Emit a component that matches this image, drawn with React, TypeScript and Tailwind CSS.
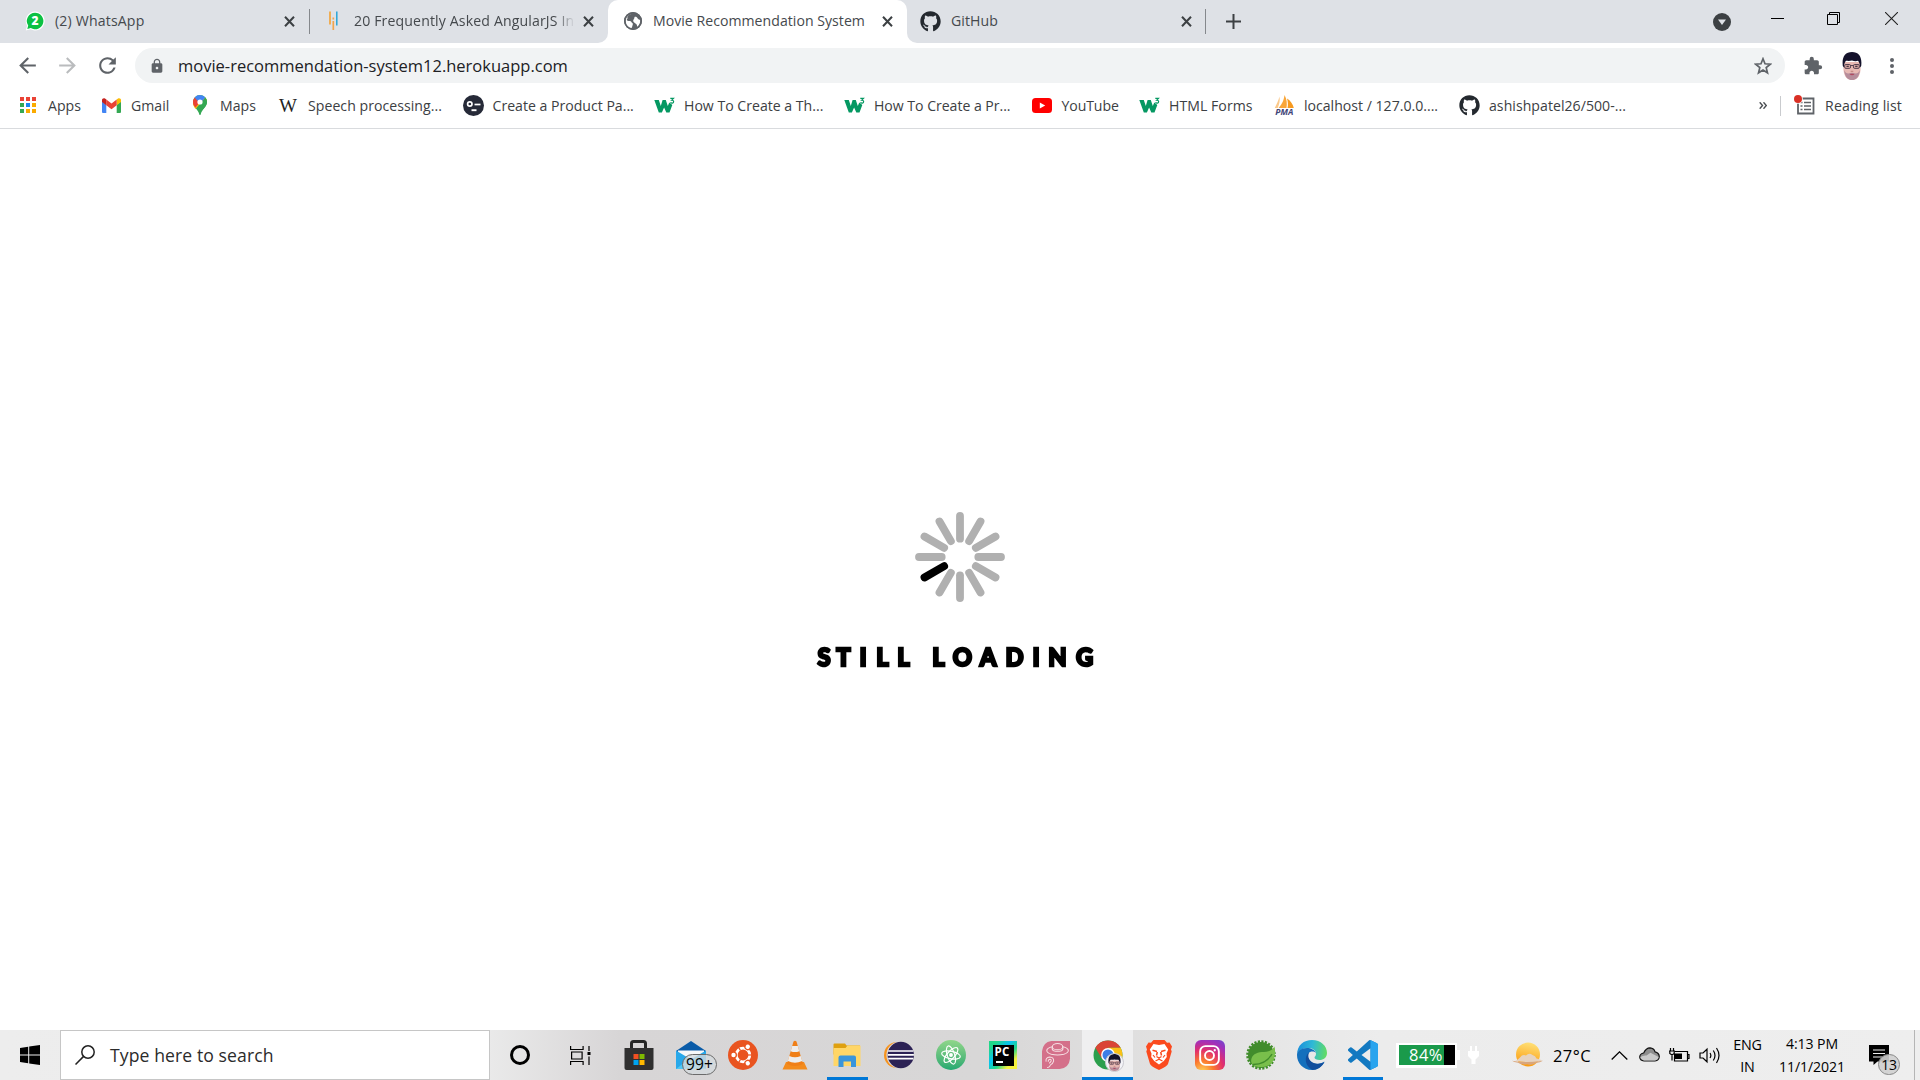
import React from "react";
import { FaGithub } from "react-icons/fa";
import { MdExtension, MdLock, MdRefresh, MdArrowBack, MdArrowForward } from "react-icons/md";

/* ---------- small shared drawings ---------- */

function Portrait({ className }: { className: string }) {
  return (
    <svg className={className} viewBox="0 0 20 28" preserveAspectRatio="none">
      <path d="M2 10h16l.6 6c0 3-.6 6-2 8.500-1.500 2.300-3.500 3.500-6.600 3.500s-5.100-1.200-6.600-3.500C2 22 1.400 19 1.400 16z" fill="#e8b9b3" />
      <path d="M.8 14C-.3 5 3 0 10 0s10.300 5 9.200 14l-1.200 1.500c0-3-.6-5-2-6.700-2 .6-4 .3-6-.3-2 .600-4 .5-6 .3-1.400 1.700-2 3.700-2 6.700z" fill="#14122b" />
      <path d="M2 18c.6 4 1.700 6.500 3 8 1.500 1.500 3 2 5 2s3.500-.5 5-2c1.300-1.500 2.400-4 3-8-1.300 2.500-2.300 3.500-4.500 3.500-2.300-1-4.700-1-7 0C4.300 21.500 3.300 20.500 2 18z" fill="#b68d9b" />
      <rect x="2.600" y="12.500" width="6" height="3.900" rx="1.300" fill="#d2a3a0" stroke="#4a3848" strokeWidth=".9" />
      <rect x="11.400" y="12.500" width="6" height="3.900" rx="1.300" fill="#d2a3a0" stroke="#4a3848" strokeWidth=".9" />
      <path d="M8.600 13.500h2.800" stroke="#4a3848" strokeWidth=".9" />
      <path d="M4.500 14.300h2.300M13.200 14.300h2.300" stroke="#2a1d2c" strokeWidth="1" />
      <path d="M8.700 19.300h2.600" stroke="#b87a74" strokeWidth=".9" />
      <path d="M7.500 22.300c1.700-.6 3.300-.6 5 0-1.500 1.300-3.500 1.300-5 0z" fill="#b04a5e" />
    </svg>
  );
}

function TabClose() {
  return (
    <svg className="h-[11px] w-[11px] shrink-0" viewBox="0 0 11 11">
      <path d="M1 .8l9 9.400M10 .8l-9 9.400" stroke="#3c4043" strokeWidth="2" />
    </svg>
  );
}

function GlobeIcon() {
  return (
    <svg className="h-[18px] w-[18px] shrink-0" viewBox="0 0 18 18">
      <circle cx="9" cy="9" r="9" fill="#5f6368" />
      <path d="M9.500 1.800c-2 .8-1.500 2-3 3-1.700.8-3.200 1.200-3.700 2.700-.3 1.500 1.500 1.300 3 1.500 1.600.2 1.500 1.300 2.500 2 1 .5.500 1.700.200 2.500-.3 1-.5 2-1.200 3.200-3.200-.6-5.800-3.500-5.800-7.700 0-4 3.500-7.400 8-7.200z" fill="#fff" />
      <path d="M10.500 5c1.500-.5 2.500.3 3.200 1.500.5 1 1.700 1 2.700 1.500.2 3-1.200 5.500-3.400 7 .3-1.700-.2-2.700-1.200-3.300C10.500 10.700 9 10 9.200 8.500c.2-1.200 1.300-1.300 1.300-3.500z" fill="#fff" />
      <path d="M9 0a9 9 0 1 1 0 18A9 9 0 0 1 9 0zm0 1.700a7.300 7.300 0 1 0 0 14.600A7.300 7.300 0 0 0 9 1.700z" fill="#5f6368" />
      <path d="M3 5.500c2 1.300 4.500 1 6-.5 1.200-1.200 2-1.500 3-1.700L10 1.500 5 2.500z" fill="#5f6368" />
    </svg>
  );
}

/* ---------- tab strip ---------- */

function TabStrip() {
  return (
    <div className="flex h-[43px] bg-[#dee1e6] text-[14.1px] text-[#45494d]">
      <div className="flex h-[42px] w-[311px] items-center pl-[25px]">
        <svg className="h-5 w-5 shrink-0" viewBox="0 0 20 20">
          <path d="M10 .5a9.500 9.500 0 1 1-4.500 17.800L.8 19.500l1.200-4.700A9.500 9.500 0 0 1 10 .5z" fill="#fff" />
          <path d="M10 1.700a8.300 8.300 0 1 1-4.200 15.400L2.300 18l.9-3.400A8.300 8.300 0 0 1 10 1.700z" fill="#0cc143" />
          <text x="10" y="14.400" textAnchor="middle" fontFamily="Open Sans" fontSize="12" fontWeight="800" fill="#fff">2</text>
        </svg>
        <span className="ml-[10px] w-[229px] tracking-[0.17px] whitespace-nowrap">(2) WhatsApp</span>
        <TabClose />
        <span className="ml-[14px] h-[25px] w-px shrink-0 bg-[#85888c]" />
      </div>
      <div className="flex h-[42px] w-[287px] items-center pl-[17px]">
        <svg className="h-5 w-[10px] shrink-0" viewBox="0 0 10 20">
          <path d="M2 .5v13" stroke="#f3a43b" strokeWidth="1.700" />
          <path d="M5.300 6.500v2M5.300 10v9" stroke="#f0a54e" strokeWidth="1.700" />
          <path d="M8.800 .5v14" stroke="#28a5d8" strokeWidth="1.500" />
        </svg>
        <span className="ml-4 w-[221px] shrink-0 overflow-hidden [mask-image:linear-gradient(to_right,black_91%,transparent)] tracking-[0.14px] whitespace-nowrap">
          20 Frequently Asked AngularJS In
        </span>
        <span className="ml-[8px] flex">
          <TabClose />
        </span>
      </div>
      <div className="flex">
        <div className="w-[10px] bg-white">
          <div className="h-full rounded-br-[10px] bg-[#dee1e6]" />
        </div>
        <div className="flex w-[299px] items-center rounded-t-[10px] bg-white pb-px pl-[16px]">
          <GlobeIcon />
          <span className="ml-[11px] w-[229px] tracking-[0.03px] whitespace-nowrap">Movie Recommendation System</span>
          <TabClose />
        </div>
        <div className="w-[10px] bg-white">
          <div className="h-full rounded-bl-[10px] bg-[#dee1e6]" />
        </div>
      </div>
      <div className="flex h-[42px] items-center pl-[3px]">
        <FaGithub className="h-[21px] w-[21px] text-[#24292f]" />
        <span className="ml-[10px] w-[230px] tracking-[0.08px]">GitHub</span>
        <TabClose />
        <span className="ml-[13px] h-[25px] w-px bg-[#85888c]" />
        <svg className="ml-5 h-[15px] w-[15px]" viewBox="0 0 15 15">
          <path d="M7.500 0v15M0 7.500h15" stroke="#3c4043" strokeWidth="2" />
        </svg>
      </div>
      <div className="ml-auto flex pr-[22px]">
        <svg className="mt-[13px] mr-[40px] h-[18px] w-[18px]" viewBox="0 0 18 18">
          <circle cx="9" cy="9" r="9" fill="#3c4043" />
          <path d="M5 6.500h8l-4 5.500z" fill="#dee1e6" />
        </svg>
        <svg className="mt-3 mr-[43px] h-[13px] w-[13px]" viewBox="0 0 13 13">
          <path d="M0 6.500h13" stroke="#000" />
        </svg>
        <svg className="mt-3 mr-[45px] h-[13px] w-[13px]" viewBox="0 0 13 13" fill="none" stroke="#000">
          <path d="M.5 2.500h10v10H.5zM2.500 2.500v-2h10v10h-2" />
        </svg>
        <svg className="mt-3 h-[13px] w-[13px]" viewBox="0 0 13 13">
          <path d="M0 0l13 13M13 0L0 13" stroke="#222" strokeWidth="1.100" />
        </svg>
      </div>
    </div>
  );
}

/* ---------- address bar ---------- */

function Toolbar() {
  return (
    <div className="flex h-[45px] items-center pl-[15px] text-[#5f6368]">
      <MdArrowBack className="h-[25px] w-[25px]" />
      <MdArrowForward className="ml-[15px] h-[25px] w-[25px] text-[#babcbe]" />
      <MdRefresh className="ml-[15px] h-[25px] w-[25px]" />
      <div className="ml-[15px] flex h-[35px] w-[1650px] items-center rounded-full bg-[#f1f3f4]">
        <MdLock className="ml-[14px] h-4 w-4" />
        <span className="ml-[13px] pt-[2px] text-[16.5px] text-[#202124]">movie-recommendation-system12.herokuapp.com</span>
        <svg className="mr-[13px] ml-auto h-[18px] w-[18px]" viewBox="0 0 18 18">
          <path d="M9 1.800l2 5 5.300.4-4.100 3.400 1.300 5.200L9 13l-4.500 2.800 1.300-5.200-4.100-3.400L7 6.800z" fill="none" stroke="#5f6368" strokeWidth="1.700" />
        </svg>
      </div>
      <MdExtension className="ml-[18px] h-[20px] w-[20px]" />
      <Portrait className="ml-[19px] h-[28px] w-5" />
      <div className="ml-[28px] flex flex-col gap-[2px]">
        <span className="h-1 w-1 rounded-full bg-[#5f6368]" />
        <span className="h-1 w-1 rounded-full bg-[#5f6368]" />
        <span className="h-1 w-1 rounded-full bg-[#5f6368]" />
      </div>
    </div>
  );
}

/* ---------- bookmarks ---------- */

function AppsIcon() {
  const dots = ["#ea4335", "#ea4335", "#ea4335", "#34a853", "#1a86f0", "#fbab00", "#34a853", "#fbab00", "#fbab00"];
  return (
    <span className="grid grid-cols-3 gap-[2px]">
      {dots.map((c, i) => (
        <span key={i} className="h-1 w-1" style={{ backgroundColor: c }} />
      ))}
    </span>
  );
}

function GmailIcon() {
  return (
    <svg className="h-[15px] w-[19px]" viewBox="0 0 19 15">
      <path d="M0 3.500l4.300 3.300V15H1.300C.5 15 0 14.500 0 13.700z" fill="#4285f4" />
      <path d="M19 3.500l-4.300 3.300V15h3c.8 0 1.300-.5 1.300-1.300z" fill="#34a853" />
      <path d="M14.700 1.500L16 .5c1.300-.9 3 0 3 1.500v2l-4.300 3.300z" fill="#fbbc04" />
      <path d="M4.300 1.600l5.200 4 5.200-4v5.700l-5.200 4-5.200-4z" fill="#ea4335" />
      <path d="M0 2C0 .5 1.700-.4 3 .5l1.300 1v5.800L0 4z" fill="#c5221f" />
    </svg>
  );
}

function MapsIcon() {
  return (
    <svg className="h-5 w-[14px]" viewBox="0 0 14 20">
      <path d="M7 0a7 7 0 0 1 7 7c0 5-5.500 7.500-6.300 12.500-.1.700-1.300.7-1.400 0C5.500 14.500 0 12 0 7a7 7 0 0 1 7-7z" fill="#34a853" />
      <path d="M14 7A7 7 0 0 0 12.400 2.600L2.500 14C1 12 0 10 0 7L7 0z" fill="#fbbc04" />
      <path d="M0 7a7 7 0 0 1 1.700-4.500L7 7l-4.500 5.500C1 11 0 9.500 0 7z" fill="#ea4335" />
      <path d="M1.700 2.500A7 7 0 0 1 12.400 2.600L7 8.500z" fill="#4285f4" />
      <path d="M12.400 2.600A7 7 0 0 1 14 7c0 3-2 5-3.700 7L7 10z" fill="#34a853" />
      <circle cx="7" cy="7" r="2.600" fill="#fff" />
    </svg>
  );
}

function WinkIcon() {
  return (
    <svg className="ml-px h-[21px] w-[21px] shrink-0" viewBox="0 0 21 21">
      <circle cx="10.500" cy="10.500" r="10.500" fill="#262a38" />
      <circle cx="6.800" cy="9" r="2.200" fill="none" stroke="#fff" strokeWidth="1.700" />
      <path d="M11.500 9.500h6" stroke="#fff" strokeWidth="1.700" />
      <path d="M8.500 15.200h5" stroke="#fff" strokeWidth="1.900" />
    </svg>
  );
}

function W3Icon() {
  return (
    <svg className="h-[16px] w-[21px] shrink-0" viewBox="0 0 21 16">
      <path d="M.3 3h4.500l2 6 1.800-6h3.200l2 6 1.500-3.500 3 2.500-2.800 7.500h-3.200l-2.200-5-2.200 5H4.800z" fill="#059862" />
      <path d="M16.300 1.300h3.200l-1.800 1.900c1.300-.1 2 .6 1.900 1.600 0 1.300-1.900 1.800-3.200.8" fill="none" stroke="#059862" strokeWidth="1.200" />
    </svg>
  );
}

function YouTubeIcon() {
  return (
    <svg className="h-[15px] w-[20px]" viewBox="0 0 20 15">
      <rect width="20" height="15" rx="3.500" fill="#f00" />
      <path d="M7.800 4.500v6l5.400-3z" fill="#fff" />
    </svg>
  );
}

function PmaIcon() {
  return (
    <svg className="h-5 w-[21px] shrink-0" viewBox="0 0 21 20">
      <path d="M.8 13C3 8.500 4.500 5 5.500 1.500c.7 4-.2 8-1.800 11.500z" fill="#fbc98a" />
      <path d="M4.500 13C9 8 10 4 10.500 0c2.500 4 2.700 9 2 13z" fill="#f9a63a" />
      <path d="M13.500 13c.8-3 .4-6.500-.5-9.500 3.500 2 6 6 6.800 9.500z" fill="#f79a20" />
      <text x="10.300" y="19.500" textAnchor="middle" fontFamily="Open Sans" fontSize="8.500" fontWeight="700" fontStyle="italic" fill="#3f4577">PMA</text>
    </svg>
  );
}

const W = () => <span className="font-['Liberation_Serif',serif] text-[19px] leading-none text-[#222]">W</span>;
const Git = () => <FaGithub className="h-[21px] w-[21px] shrink-0 text-[#24292f]" />;

const bookmarks = [
  { label: "Apps", Icon: AppsIcon, cls: "w-[83px]" },
  { label: "Gmail", Icon: GmailIcon, cls: "w-[89px]" },
  { label: "Maps", Icon: MapsIcon, cls: "w-[88px]" },
  { label: "Speech processing...", Icon: W, cls: "w-[184.500px] tracking-[0.04px]" },
  { label: "Create a Product Pa...", Icon: WinkIcon, cls: "w-[191.500px]" },
  { label: "How To Create a Th...", Icon: W3Icon, cls: "w-[190px]" },
  { label: "How To Create a Pr...", Icon: W3Icon, cls: "w-[187.500px] tracking-[-0.03px]" },
  { label: "YouTube", Icon: YouTubeIcon, cls: "w-[107.500px] tracking-[-0.1px]" },
  { label: "HTML Forms", Icon: W3Icon, cls: "w-[135px] tracking-[0.04px]" },
  { label: "localhost / 127.0.0....", Icon: PmaIcon, cls: "w-[185px]" },
  { label: "ashishpatel26/500-...", Icon: Git, cls: "w-[180px] tracking-[0.04px]" },
];

function BookmarksBar() {
  return (
    <div className="flex h-[41px] items-center border-b border-[#d9dbde] pb-[5px] pl-[18px] text-[14.1px] text-[#3c4043]">
      {bookmarks.map(({ label, Icon, cls }, i) => (
        <div key={i} className={"flex shrink-0 items-center gap-[10px] whitespace-nowrap " + cls}>
          <span className="flex w-5 shrink-0 justify-center">
            <Icon />
          </span>
          {label}
        </div>
      ))}
      <svg className="ml-auto h-[7px] w-[8px]" viewBox="0 0 8 7">
        <path d="M.7.300l2.800 3.200L.7 6.700M4.500.300l2.800 3.200-2.800 3.200" fill="none" stroke="#4a4e52" strokeWidth="1.400" />
      </svg>
      <span className="ml-[13px] h-5 w-px bg-[#c9cbce]" />
      <svg className="ml-[13px] h-[21px] w-[21px]" viewBox="0 0 21 21">
        <path d="M4 3.500h15.500V18.500H4z" fill="none" stroke="#5f6368" strokeWidth="1.800" />
        <path d="M6.500 7.500h2M6.500 11h2M6.500 14.500h2M10 7.500h7M10 11h7M10 14.500h7" stroke="#5f6368" strokeWidth="1.600" />
        <circle cx="4" cy="4" r="4.800" fill="#fff" />
        <circle cx="4" cy="4" r="4" fill="#d93025" />
      </svg>
      <span className="mr-[18px] ml-[10px] tracking-[0.12px]">Reading list</span>
    </div>
  );
}

/* ---------- page ---------- */

const spokes = [0, 30, 60, 90, 120, 150, 180, 210, 240, 270, 300, 330];
const still: [string, string][] = [["S", "w-5"], ["T", "w-[19px]"], ["I", "w-5"], ["L", "w-[19px]"], ["L", "w-[23px]"]];
const loading: [string, string][] = [
  ["L", "w-[23px]"], ["O", "w-[25px]"], ["A", "w-[26px]"], ["D", "w-[27px]"], ["I", "w-4"], ["N", "w-[27px]"], ["G", "w-[27px]"],
];

function Word({ letters }: { letters: [string, string][] }) {
  return (
    <span className="flex">
      {letters.map(([c, w], i) => (
        <span key={i} className={"flex scale-x-95 justify-center " + w}>{c}</span>
      ))}
    </span>
  );
}

function Page() {
  return (
    <main className="flex grow flex-col items-center bg-white pt-[381.500px]">
      <svg className="h-[92px] w-[92px]" viewBox="-46 -46 92 92">
        {spokes.map((a) => (
          <path key={a} d="M0-18.300V-41" transform={`rotate(${a})`} stroke={a === 240 ? "#000" : "#b0b0b0"} strokeWidth="7.800" strokeLinecap="round" />
        ))}
      </svg>
      <div className="mt-[36.500px] mr-[8px] flex gap-3 font-['Lato',sans-serif] text-[25px] leading-[34px] font-black text-black [-webkit-text-stroke:2.400px_black]">
        <Word letters={still} />
        <Word letters={loading} />
      </div>
    </main>
  );
}

/* ---------- taskbar icons ---------- */

function StoreIcon() {
  return (
    <svg className="h-[30px] w-[30px]" viewBox="0 0 30 30">
      <path d="M7.500 9V3.500Q7.500 1.500 9.500 1.500h10Q21.500 1.500 21.500 3.500V9" fill="none" stroke="#262626" strokeWidth="3" />
      <path d="M.5 8h29v20q0 2-2 2h-25q-2 0-2-2z" fill="#303030" />
      <path d="M9.500 14h5v5h-5z" fill="#f25022" />
      <path d="M15.500 14h5v5h-5z" fill="#7fba00" />
      <path d="M9.500 20h5v5h-5z" fill="#00a4ef" />
      <path d="M15.500 20h5v5h-5z" fill="#ffb900" />
    </svg>
  );
}

function MailIcon() {
  return (
    <div className="relative">
      <svg className="h-[30px] w-[30px]" viewBox="0 0 30 30">
        <path d="M0 11L15 1l15 10v5H0z" fill="#0a5ba8" />
        <path d="M2 10.500h26v8H2z" fill="#f6f8fa" />
        <path d="M0 10.500l15 9 15-9V29H0z" fill="#28a8ea" />
        <path d="M0 29l15-11.500L30 29z" fill="#50c8f4" />
      </svg>
      <span className="absolute top-[14px] left-[6px] flex h-[21px] w-[35px] items-center justify-center rounded-full border border-[#6b6b6b] bg-[#d4dadd]/80 text-[15.500px] font-medium tracking-[0.2px] text-black">
        99+
      </span>
    </div>
  );
}

function UbuntuIcon() {
  return (
    <svg className="h-[30px] w-[30px]" viewBox="-15 -15 30 30">
      <circle r="15" fill="#e95420" />
      <circle r="6.800" fill="none" stroke="#fff" strokeWidth="2.800" />
      {[0, 120, 240].map((a) => (
        <g key={a} transform={`rotate(${a})`}>
          <circle cx="-9.300" r="3.300" fill="#e95420" />
          <circle cx="-9.500" r="2.200" fill="#fff" />
          <path d="M5 0h5" stroke="#e95420" strokeWidth="1.200" />
        </g>
      ))}
    </svg>
  );
}

function VlcIcon() {
  return (
    <svg className="h-[30px] w-[26px]" viewBox="0 0 26 30">
      <path d="M4 22h18l3.500 7.500H.5z" fill="#f38b1c" />
      <path d="M11.500 1.500Q13 0 14.500 1.500L21 24Q13 28 5 24z" fill="#f07f17" />
      <path d="M10.200 6h5.600l1.500 5.200q-4.300 1.800-8.600 0z" fill="#ededed" />
      <path d="M7.300 16q5.700 2.400 11.400 0l1.500 5q-7.200 3.400-14.400 0z" fill="#ededed" />
    </svg>
  );
}

function ExplorerIcon() {
  return (
    <svg className="h-[26px] w-[28px]" viewBox="0 0 28 26">
      <path d="M.5 2.500q0-1 1-1h10.500l1.500 2H27v9H.5z" fill="#dfa00f" />
      <path d="M.5 6h12l2-2.500H27q.5 0 .5.500v20H.5z" fill="#ffd667" />
      <path d="M5.500 25V15.500q0-2 2-2h13.500q2 0 2 2V25h-5v-5.500h-7.500V25z" fill="#3a95db" />
    </svg>
  );
}

function EclipseIcon() {
  return (
    <svg className="h-[28px] w-[30px]" viewBox="0 0 30 28">
      <circle cx="13" cy="14" r="13" fill="#f7941e" />
      <circle cx="16" cy="14" r="13.600" fill="#dcd9dc" />
      <circle cx="16.800" cy="14" r="13.200" fill="#2c2255" />
      <path d="M4.200 10h25.200M3.700 13.800h26.200M4.200 17.600h25.200" stroke="#fff" strokeWidth="1.700" />
    </svg>
  );
}

function AtomIcon() {
  return (
    <span className="flex h-[30px] w-[30px] items-center justify-center rounded-full bg-gradient-to-b from-[#8fd68a] to-[#1fa971]">
      <svg className="h-[22px] w-[22px]" viewBox="-11 -11 22 22" fill="none" stroke="#fff" strokeWidth="1.200">
        <ellipse rx="9.500" ry="3.700" transform="rotate(12)" />
        <ellipse rx="9.500" ry="3.700" transform="rotate(72)" />
        <ellipse rx="9.500" ry="3.700" transform="rotate(132)" />
        <circle r="1.300" fill="#fff" />
      </svg>
    </span>
  );
}

function PyCharmIcon() {
  return (
    <span className="flex h-[28px] w-[28px] items-center justify-center bg-[linear-gradient(135deg,#21d789_15%,#07c3f2_40%,#21d789_60%,#f6f23f_80%)]">
      <span className="flex h-[21px] w-[21px] flex-col bg-black pl-[2px] text-white">
        <span className="text-[11.500px] leading-[14px] font-bold tracking-[0.2px]">PC</span>
        <span className="mt-[2px] ml-px h-[2px] w-[7px] bg-white" />
      </span>
    </span>
  );
}

function EarIcon() {
  return (
    <svg className="h-[28px] w-[28px]" viewBox="0 0 27 27">
      <path d="M9 0h18v17q-1 9-10 10H0V10Q1 1 9 0z" fill="#d4708a" />
      <g fill="none" stroke="#f6dfe3" strokeWidth="1">
        <path d="M10 5.500C3 7 3 11 9 12.800q6 1.500 12 0C27 11 27 7 20 5.500" />
        <ellipse cx="15" cy="5.500" rx="5" ry="3" />
        <path d="M10 5.500q-.8 3 1.200 3.800 3.800 1.300 7.600 0Q20.800 8.500 20 5.500" />
        <path d="M4 20q-1-4 3.500-4.500 4 .2 3.700 4-.7 2.500-3 3.500-1 3-3.200 2.500M6 20q0-2.500 2-2.300 1.500.5.500 2.300l-1.500 1.500" />
      </g>
    </svg>
  );
}

function ChromeIcon() {
  return (
    <div className="relative">
      <svg className="h-[30px] w-[30px]" viewBox="-15 -15 30 30">
        <circle r="14.500" fill="#2b9f4c" />
        <path d="M-12.600-7.200A14.500 14.500 0 0 1 12.600-7.200H0L-6.200 3.600z" fill="#da4535" />
        <path d="M12.600-7.200A14.500 14.500 0 0 1 0 14.500L6.300 3.600 0-7.200z" fill="#fbc116" />
        <circle r="6.900" fill="#fff" />
        <circle r="5.500" fill="#3c7de6" />
      </svg>
      <span className="absolute top-[13px] left-[12px] flex h-[19px] w-[19px] items-center justify-center overflow-hidden rounded-full border border-[#c9c9cf] bg-[#f4f4f8]">
        <Portrait className="h-[18px] w-[13px]" />
      </span>
    </div>
  );
}

function BraveIcon() {
  return (
    <svg className="h-[30px] w-[26px]" viewBox="0 0 26 30">
      <path d="M7.500 0h11L21 2.800l2.500-.3L26 6.500l-1 3 .7 2L22 24q-1 2.500-9 6-8-3.500-9-6L.3 11.500l.7-2-1-3 2.500-4 2.500.3z" fill="#fb4a1e" />
      <path d="M13 5l5.500-1 3.700 5.500-1.700 4 .3 3.500-3 4L13 24.500 8.200 21l-3-4 .3-3.500-1.700-4L7.500 4z" fill="#fff" />
      <path d="M6.500 10.300l4.500 1.200M19.500 10.300L15 11.500M11.300 12l-.8 3.500M14.700 12l.8 3.500" fill="none" stroke="#fb4a1e" strokeWidth="1.500" />
      <path d="M10.500 16.500L13 18l2.500-1.500M13 18v1.500M7 15l2 2.500M19 15l-2 2.500M9.500 21L13 19.200l3.500 1.800" fill="none" stroke="#fb4a1e" strokeWidth="1.200" />
    </svg>
  );
}

function InstagramIcon() {
  return (
    <span className="flex h-[30px] w-[30px] items-center justify-center rounded-[6px] bg-[radial-gradient(circle_at_25%_105%,#fed45a_0%,#fb7a2e_28%,#e2306c_55%,#a42fb8_78%,#5a50d8_105%)]">
      <svg className="h-[21px] w-[21px]" viewBox="0 0 22 22" fill="none" stroke="#fff" strokeWidth="2">
        <rect x="1.200" y="1.200" width="19.600" height="19.600" rx="5.500" />
        <circle cx="11" cy="11" r="4.700" />
        <circle cx="16.500" cy="5.500" r="1.200" fill="#fff" stroke="none" />
      </svg>
    </span>
  );
}

function SpringIcon() {
  return (
    <svg className="h-[30px] w-[30px]" viewBox="-15 -15 30 30">
      <circle r="13.300" fill="none" stroke="#408c2b" strokeWidth="3" strokeDasharray="2.100 1.380" />
      <circle r="13" fill="#418c2c" />
      <path d="M13.500-8.500C16 5 10 12 1 12-8 12.500-11 8-9.500 3.500-8-1.500-3-3 3-3 8-3 11.500-5 13.500-8.500z" fill="#79bf4b" />
      <path d="M-8 9.500C0 9.500 7 6 11-1" fill="none" stroke="#418c2c" strokeWidth="1.400" />
    </svg>
  );
}

function EdgeIcon() {
  return (
    <svg className="h-[30px] w-[30px]" viewBox="0 0 30 30">
      <defs>
        <linearGradient id="edgeTop" x1="0" y1=".4" x2="1" y2=".5">
          <stop offset="0" stopColor="#1b8fdc" />
          <stop offset=".5" stopColor="#2fb9d6" />
          <stop offset="1" stopColor="#62dc62" />
        </linearGradient>
      </defs>
      <path d="M0 15C0 5 7 0 15 0c9 0 15 6 15 13 0 4.500-3.500 7-7.500 7-3 0-5-1-5-2.500 0-1 1.500-1.500 1.500-3.800C19 10 15 8 11 8 5 8 0 11 0 15z" fill="url(#edgeTop)" />
      <path d="M0 15c0-4 4-7 10-7 4 0 8 2 9 5-2-2-6-2-7.500.5C9 18 13 24 20 24c3 0 5-1 7.500-2.500C25 27 20 30 15 30 6 30 0 23 0 15z" fill="#1470bd" />
      <path d="M12 12.500C7 16 7.500 26 15.500 30 20 30 25 27 27.500 22 25 23.500 22 24 19 23.500 12.500 22.500 10 17 12 12.500z" fill="#124e9d" />
    </svg>
  );
}

function VsCodeIcon() {
  return (
    <svg className="h-[30px] w-[30px]" viewBox="0 0 24 24">
      <path d="M23.150 2.587L18.210.210a1.494 1.494 0 0 0-1.705.290l-9.460 8.630-4.120-3.128a.999.999 0 0 0-1.276.057L.327 7.261A1 1 0 0 0 .326 8.740L3.899 12 .326 15.260a1 1 0 0 0 .001 1.479L1.650 17.940a.999.999 0 0 0 1.276.057l4.120-3.128 9.460 8.630a1.492 1.492 0 0 0 1.704.290l4.942-2.377A1.500 1.500 0 0 0 24 20.060V3.939a1.500 1.500 0 0 0-.850-1.352zm-5.146 14.861L10.826 12l7.178-5.448v10.896z" fill="#1279c1" />
      <path d="M18 .15l5.150 2.437A1.500 1.500 0 0 1 24 3.939V20.060a1.500 1.500 0 0 1-.85 1.352L18 23.850z" fill="#2aa4ee" />
    </svg>
  );
}

const pinned = [
  { Icon: StoreIcon, cls: "w-[52px]" },
  { Icon: MailIcon, cls: "w-[52px]" },
  { Icon: UbuntuIcon, cls: "w-[52px]" },
  { Icon: VlcIcon, cls: "w-[52px]" },
  { Icon: ExplorerIcon, cls: "w-[52px]", bar: "w-[41px]" },
  { Icon: EclipseIcon, cls: "w-[52px]" },
  { Icon: AtomIcon, cls: "w-[52px]" },
  { Icon: PyCharmIcon, cls: "w-[52px]" },
  { Icon: EarIcon, cls: "w-[53px]" },
  { Icon: ChromeIcon, cls: "w-[51px] bg-[#efeff0]", bar: "w-[51px]" },
  { Icon: BraveIcon, cls: "w-[51px]" },
  { Icon: InstagramIcon, cls: "w-[51px]" },
  { Icon: SpringIcon, cls: "w-[51px]" },
  { Icon: EdgeIcon, cls: "w-[51px]" },
  { Icon: VsCodeIcon, cls: "w-[51px]", bar: "w-[40px]" },
];

/* ---------- system tray ---------- */

function Tray() {
  return (
    <div className="flex grow items-center text-[14.1px] text-black">
      <div className="ml-2 flex h-[25px] w-[61px] items-center bg-white pl-[3px]">
        <div className="flex h-5 w-[45px] items-center justify-center bg-[#1a9a4b] pl-[9px] text-[16.500px] tracking-[0.5px] text-white">84%</div>
        <div className="h-5 w-[11px] bg-black" />
      </div>
      <div className="h-[10px] w-[3px] bg-white" />
      <svg className="ml-[8px] h-[18px] w-[11px]" viewBox="0 0 11 18">
        <path d="M2 0h2v5h3V0h2v5h2v5l-3.500 3.500V18h-4v-4.500L0 10V5h2z" fill="#fff" />
      </svg>
      <svg className="ml-[33px] h-[26px] w-[31px]" viewBox="0 0 31 26">
        <defs>
          <linearGradient id="sun" x1=".6" y1="0" x2=".4" y2="1">
            <stop offset="0" stopColor="#ffe076" />
            <stop offset="1" stopColor="#fb9a0c" />
          </linearGradient>
        </defs>
        <circle cx="16" cy="12.500" r="12" fill="url(#sun)" />
        <path d="M3 18.500q3-.5 5-3 2.500-3.500 6-2 3-3 6.500-.5 3 .5 4 3.500 2.500.5 6 2-5 1.500-14 1.500t-13.500-1.500z" fill="#e6d3c0" />
        <path d="M0 18.800q15 2.600 31 0-3 1.800-7 2.200-4 2.800-8.500 1.300Q9 23.300 6 20.800 2 20.300 0 18.800z" fill="#d9a67c" />
      </svg>
      <span className="ml-[10px] w-[38px] pt-[2px] text-[16.500px] tracking-[0.4px] whitespace-nowrap">27°C</span>
      <svg className="ml-[20px] h-[9px] w-[17px]" viewBox="0 0 17 9">
        <path d="M.7 8.500L8.500.9l7.800 7.600" fill="none" stroke="#000" strokeWidth="1.300" />
      </svg>
      <svg className="mb-[2px] ml-[11px] h-[15px] w-[21px]" viewBox="0 0 21 15">
        <path d="M5 14q-4-.5-4.300-4 .3-3.500 4-4Q7 .8 11 .8q4 .3 5 4 4 1 4.300 4.700-.3 4-4.300 4.500z" fill="#8e8e8e" stroke="#111" strokeWidth="1.200" />
        <path d="M5 13.400q-3.500-.8-3.600-3.300Q4 8 7.500 8.500l4-2.800L19.600 10q-.3 3-3.600 3.400z" fill="#c9c9c9" />
      </svg>
      <svg className="ml-[9px] h-[15px] w-[21px]" viewBox="0 0 21 15">
        <path d="M6 3.500h12.500v9.500H5.500V9M18.500 6.500h1.500v4h-1.500" fill="none" stroke="#000" strokeWidth="1.200" />
        <path d="M5 5.500h8v5.500H5z" fill="#000" />
        <path d="M1.500 0v2.500M4.500 0v2.500M0 3h6M.8 3v2.500L3 7l2.200-1.500V3M3 7v5.500" fill="none" stroke="#000" strokeWidth="1.200" />
      </svg>
      <svg className="ml-[9px] h-[17px] w-[22px]" viewBox="0 0 22 17" fill="none" stroke="#000" strokeWidth="1.200">
        <path d="M1 6h3l4-3.800v12.600L4 11H1z" />
        <path d="M11 6q1.700 2.500 0 5M14.300 3.500q3.400 5 0 10M17.500 1q5 7.500 0 15" />
      </svg>
      <div className="mt-[1px] ml-[12px] flex w-[29px] flex-col items-center text-[14.300px] leading-[22px] tracking-[-0.15px]">
        <span>ENG</span>
        <span>IN</span>
      </div>
      <div className="ml-[16px] flex w-[68px] flex-col items-center leading-[23px] tracking-[-0.08px] whitespace-nowrap">
        <span>4:13 PM</span>
        <span>11/1/2021</span>
      </div>
      <div className="relative ml-[23px] h-[50px] w-[46px] border-r border-[#b5b5b5]">
        <svg className="mt-[15px] h-[20px] w-5" viewBox="0 0 20 20">
          <path d="M0 0h20v16.500H8.500L4.500 20v-3.500H0z" fill="#000" />
          <path d="M4 5h12M4 8.500h12M4 12h9" stroke="#eee" strokeWidth="1.200" />
        </svg>
        <span className="absolute top-[24px] left-[9px] flex h-[21px] w-[22px] items-center justify-center rounded-full border border-[#888] bg-[#cfcfcf]/90 text-[14px] font-medium tracking-[-0.3px]">13</span>
      </div>
    </div>
  );
}

function Taskbar() {
  return (
    <footer className="flex h-[50px] bg-[linear-gradient(90deg,#ededed_0px,#ebebeb_480px,#d7d5d6_620px,#d8d7d7_980px,#ececec_1380px,#eeeeee_1920px)]">
      <div className="flex w-[60px] items-center justify-center">
        <svg className="h-5 w-5" viewBox="0 0 20 20">
          <path d="M0 3l8.200-1.200v7.700H0zM9.200 1.600L20 0v9.500H9.200zM0 10.500h8.200v7.700L0 17zM9.200 10.500H20V20L9.200 18.400z" fill="#000" />
        </svg>
      </div>
      <div className="flex w-[430px] items-center border border-[#c6c6c6] bg-white pl-[14px]">
        <svg className="h-5 w-5" viewBox="0 0 20 20" fill="none" stroke="#222" strokeWidth="1.500">
          <circle cx="13" cy="7" r="6.200" />
          <path d="M8.600 11.400L.5 19.500" />
        </svg>
        <span className="ml-[15px] text-[17.600px] tracking-[0.09px] text-[#2b2b2b]">Type here to search</span>
      </div>
      <div className="flex w-[60px] items-center justify-center">
        <span className="h-5 w-5 rounded-full border-3 border-black" />
      </div>
      <div className="mr-[3px] flex w-[60px] items-center justify-center">
        <svg className="h-[19px] w-[21px]" viewBox="0 0 21 19" fill="none" stroke="#000" strokeWidth="1.200">
          <path d="M.6 0v3.500h12.500V0M.6 19v-3.500h12.500V19M1.600 6h10.500v7H1.600zM19 0v5M19 10.500V19" />
          <path d="M17.500 6h3v3h-3z" fill="#000" stroke="none" />
        </svg>
      </div>
      {pinned.map(({ Icon, cls, bar }, i) => (
        <div key={i} className={"flex shrink-0 flex-col items-center " + cls}>
          <div className="flex h-[47px] items-center pt-[3px]">
            <Icon />
          </div>
          {bar && <div className={"h-[3px] bg-[#0078d7] " + bar} />}
        </div>
      ))}
      <Tray />
    </footer>
  );
}

export default function App() {
  return (
    <div className="flex h-screen w-full flex-col overflow-hidden bg-white font-['Open_Sans',sans-serif]">
      <TabStrip />
      <Toolbar />
      <BookmarksBar />
      <Page />
      <Taskbar />
    </div>
  );
}
